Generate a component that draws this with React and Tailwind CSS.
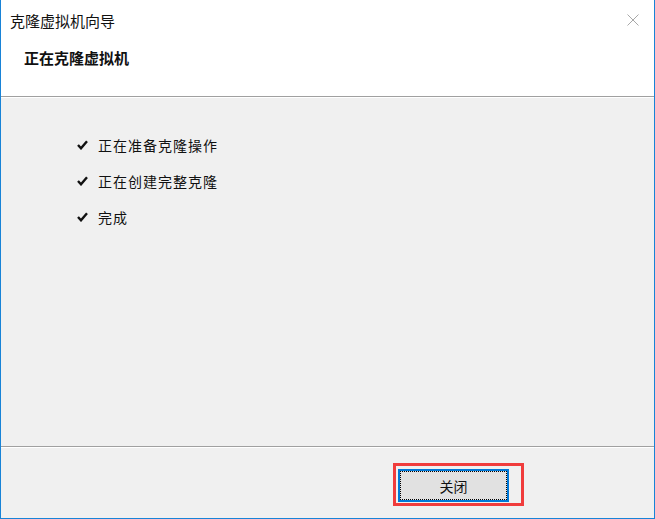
import React from 'react';

const font = { fontFamily: '"Microsoft YaHei", "Noto Sans CJK SC", sans-serif' };

function Check() {
    return (
        <svg width="11" height="10" viewBox="0 0 11 10" className="shrink-0">
            <path d="M1 5 L4 8.3 L10 1.3" fill="none" stroke="#111" strokeWidth="2.4" strokeLinejoin="miter" />
        </svg>
    );
}

const steps = ['正在准备克隆操作', '正在创建完整克隆', '完成'];

export default function App() {
    return (
        <div
            className="relative w-[655px] h-[519px] flex flex-col bg-[#f0f0f0] border-l border-r border-b border-[#1883d7] text-[#111]"
            style={font}
        >
            {/* title bar + header */}
            <div className="bg-white h-[96px] shrink-0 flex flex-col">
                <div className="h-[40px] flex items-center justify-between pl-[9px] pr-[15px]">
                    <span className="text-[15px] leading-none">克隆虚拟机向导</span>
                    <svg width="12" height="12" viewBox="0 0 12 12">
                        <path d="M0.5 0.5 L11.5 11.5 M11.5 0.5 L0.5 11.5" stroke="#a8a8a8" strokeWidth="1" />
                    </svg>
                </div>
                <div className="h-[34px] flex items-center pl-[23px]">
                    <span className="text-[15px] font-bold leading-none">正在克隆虚拟机</span>
                </div>
            </div>
            <div className="h-px bg-[#a0a0a0] shrink-0" />
            <div className="h-px bg-white shrink-0" />

            {/* body */}
            <div className="flex-1 flex flex-col pt-[29px] pl-[76px]">
                {steps.map((s) => (
                    <div key={s} className="h-[36px] flex items-center gap-[10px]">
                        <Check />
                        <span className="text-[14px] tracking-[1px] leading-none">{s}</span>
                    </div>
                ))}
            </div>

            <div className="h-px bg-[#a0a0a0] shrink-0" />
            <div className="h-px bg-white shrink-0" />

            {/* footer */}
            <div className="h-[70px] shrink-0 pt-[21px] pl-[397px]">
                <button className="w-[111px] h-[33px] border-2 border-[#0078d7] bg-[#e1e1e1] p-0">
                    <div className="w-full h-full border border-dotted border-black flex items-center justify-center text-[14px] leading-none">
                        关闭
                    </div>
                </button>
            </div>

            {/* annotation */}
            <div className="absolute left-[392px] top-[463px] w-[131px] h-[43px] border-[3px] border-[#f03c3c] pointer-events-none" />
        </div>
    );
}
